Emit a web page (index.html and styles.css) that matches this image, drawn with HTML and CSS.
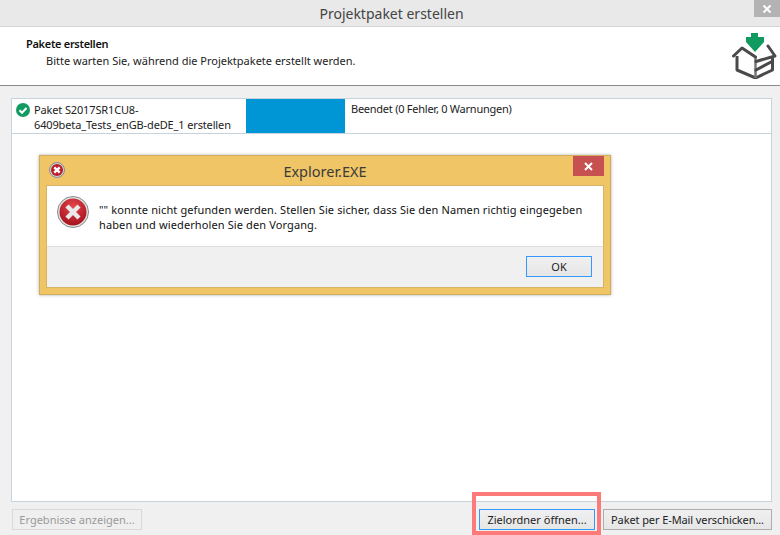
FILE: index.html
```html
<!DOCTYPE html>
<html lang="de">
<head>
<meta charset="utf-8">
<title>Projektpaket erstellen</title>
<link rel="stylesheet" href="styles.css">
</head>
<body>
<div class="window">
  <div class="titlebar">
    <span class="title">Projektpaket erstellen</span>
    <div class="win-close"><svg width="10" height="10" viewBox="0 0 10 10"><path d="M1.5 1.5l7 7M8.5 1.5l-7 7" stroke="#fff" stroke-width="2"/></svg></div>
  </div>
  <div class="header">
    <div class="header-text">
      <div class="h-title">Pakete erstellen</div>
      <div class="h-sub">Bitte warten Sie, während die Projektpakete erstellt werden.</div>
    </div>
    <svg class="pkg" width="46" height="46" viewBox="0 0 46 46">
      <path d="M5 23v14l18.500 8 17-8V23" fill="none" stroke="#4a4a4a" stroke-width="3" stroke-linejoin="round"/>
      <path d="M23.500 24v21" fill="none" stroke="#777" stroke-width="2.500"/>
      <path d="M1.500 23L10 15l13.500 9M36 13l7 10-19 5.500M24 37l16-8.500" fill="none" stroke="#4a4a4a" stroke-width="3" stroke-linejoin="round" stroke-linecap="round"/>
      <path d="M19 0h7v4h6v5L23 19 14 9V4h5z" fill="#0f9a5f"/>
    </svg>
  </div>
  <div class="body">
    <div class="panel">
      <div class="row">
        <div class="cell-name">
          <svg class="ok" width="14" height="14" viewBox="0 0 14 14"><circle cx="7" cy="7" r="7" fill="#119a62"/><path d="M3.5 7.2l2.5 2.5 4.5-4.7" fill="none" stroke="#fff" stroke-width="2"/></svg>
          <span class="name">Paket S2017SR1CU8-<br>6409beta_Tests_enGB-deDE_1 erstellen</span>
        </div>
        <div class="cell-bar"></div>
        <div class="cell-status">Beendet (0 Fehler, 0 Warnungen)</div>
      </div>
    </div>
    <div class="actions">
      <button class="btn disabled" type="button">Ergebnisse anzeigen...</button>
      <div class="actions-right">
        <div class="highlight"><button class="btn focus" type="button">Zielordner öffnen...</button></div>
        <button class="btn mail" type="button">Paket per E-Mail verschicken...</button>
      </div>
    </div>
  </div>
  <div class="dialog">
    <div class="d-title">
      <svg class="d-icon" width="16" height="16" viewBox="0 0 16 16"><circle cx="8" cy="8" r="7.5" fill="#d0d0d0" stroke="#8d8d8d"/><circle cx="8" cy="8" r="6" fill="#b9202c"/><path d="M5.3 5.3l5.4 5.4M10.7 5.3l-5.4 5.4" stroke="#fff" stroke-width="2.4"/></svg>
      <span class="d-caption">Explorer.EXE</span>
      <div class="d-close"><svg width="9" height="9" viewBox="0 0 9 9"><path d="M1 1l7 7M8 1l-7 7" stroke="#fff" stroke-width="2"/></svg></div>
    </div>
    <div class="d-inner">
      <div class="d-content">
        <svg class="d-big" width="32" height="32" viewBox="0 0 32 32">
          <defs><radialGradient id="red" cx="50%" cy="30%" r="75%"><stop offset="0" stop-color="#e4474d"/><stop offset="1" stop-color="#a10e1a"/></radialGradient></defs>
          <circle cx="16" cy="16" r="15.5" fill="#e2e2e2" stroke="#8a8a8a"/>
          <circle cx="16" cy="16" r="13.5" fill="url(#red)"/>
          <path d="M10 10l12 12M22 10L10 22" stroke="#e9e9e9" stroke-width="4.4"/>
        </svg>
        <p class="d-msg">"" konnte nicht gefunden werden. Stellen Sie sicher, dass Sie den Namen richtig eingegeben haben und wiederholen Sie den Vorgang.</p>
      </div>
      <div class="d-foot"><button class="btn ok-btn" type="button">OK</button></div>
    </div>
  </div>
</div>
</body>
</html>
```
FILE: styles.css
```css
* { box-sizing: border-box; }
html, body { margin: 0; padding: 0; }
body { width: 780px; height: 535px; overflow: hidden; font-family: "Noto Sans", "Open Sans", sans-serif; font-size: 11px; color: #1a1a1a; }
.window { position: relative; width: 780px; height: 535px; display: flex; flex-direction: column; background: #f0f0f0; }
.titlebar { position: relative; height: 27px; flex: none; background: #e9e9e9; border-bottom: 1px solid #d4d4d4; display: flex; justify-content: center; align-items: center; }
.title { font-size: 14px; color: #444; padding-left: 3px; }
.win-close { position: absolute; right: 0; top: 0; width: 26px; height: 17px; background: #b3b3b3; display: flex; align-items: center; justify-content: center; }
.header { height: 59px; flex: none; background: #fff; border-bottom: 1px solid #8b8b8b; display: flex; justify-content: space-between; padding: 6px 2px 0 26px; }
.h-title { font-weight: 600; font-size: 11px; letter-spacing: -0.3px; line-height: 16px; margin-top: 3px; color: #111; }
.h-sub { margin: 1px 0 0 20px; line-height: 16px; color: #222; }
.body { flex: 1; display: flex; flex-direction: column; padding: 12px 8px 5px 11px; min-height: 0; }
.panel { flex: 1; background: #fff; border: 1px solid #c6d3dc; }
.row { display: flex; height: 35px; border-bottom: 1px solid #c6d3dc; }
.cell-name { width: 234px; display: flex; padding: 3px 0 0 4px; gap: 4px; }
.ok { flex: none; margin-top: 1px; }
.name { line-height: 15px; color: #222; white-space: nowrap; letter-spacing: -0.14px; }
.cell-bar { width: 99px; background: #0096d6; }
.cell-status { padding: 2px 0 0 6px; line-height: 15px; color: #222; letter-spacing: -0.25px; }
.actions { flex: none; height: 28px; display: flex; justify-content: space-between; align-items: flex-end; }
.actions-right { display: flex; align-items: flex-end; gap: 2px; }
.btn { height: 21px; font: inherit; color: #222; background: linear-gradient(#f0f0f0, #e6e6e6); border: 1px solid #adadad; padding: 0 6px; margin: 0; white-space: nowrap; }
.btn.disabled { width: 130px; margin-left: 1px; color: #9a9a9a; background: #efefef; border-color: #d9d9d9; }
.highlight { width: 129px; height: 43px; border: 4px solid #fd7a7a; padding: 13px 2px 0 3px; margin-bottom: -5px; display: flex; align-items: flex-start; }
.highlight .focus { width: 116px; flex: none; border-color: #3399ff; }
.mail { width: 169px; letter-spacing: -0.1px; }
.dialog { position: absolute; left: 39px; top: 155px; width: 572px; height: 140px; background: #efc566; border: 1px solid #cfae5e; box-shadow: 0 0 3px rgba(120, 120, 120, .6); padding: 0 6px 6px; display: flex; flex-direction: column; }
.d-title { position: relative; height: 29px; flex: none; display: flex; align-items: center; justify-content: center; }
.d-icon { position: absolute; left: 3px; top: 6px; }
.d-caption { font-size: 14.5px; color: #3b3b3b; }
.d-close { position: absolute; right: 0; top: 0; width: 31px; height: 20px; background: #c75050; display: flex; align-items: center; justify-content: center; }
.d-inner { flex: 1; background: #fff; border: 1px solid #d6b463; display: flex; flex-direction: column; }
.d-content { flex: 1; display: flex; padding: 10px 10px 0 10px; gap: 10px; }
.d-big { flex: none; }
.d-msg { margin: 6px 0 0 0; width: 500px; line-height: 15px; color: #111; letter-spacing: 0.115px; }
.d-foot { height: 41px; flex: none; background: #f0f0f0; border-top: 1px solid #dfdfdf; display: flex; justify-content: flex-end; align-items: flex-start; padding: 9px 11px 0 0; }
.ok-btn { width: 66px; height: 21px; border-color: #3399ff; }
```
